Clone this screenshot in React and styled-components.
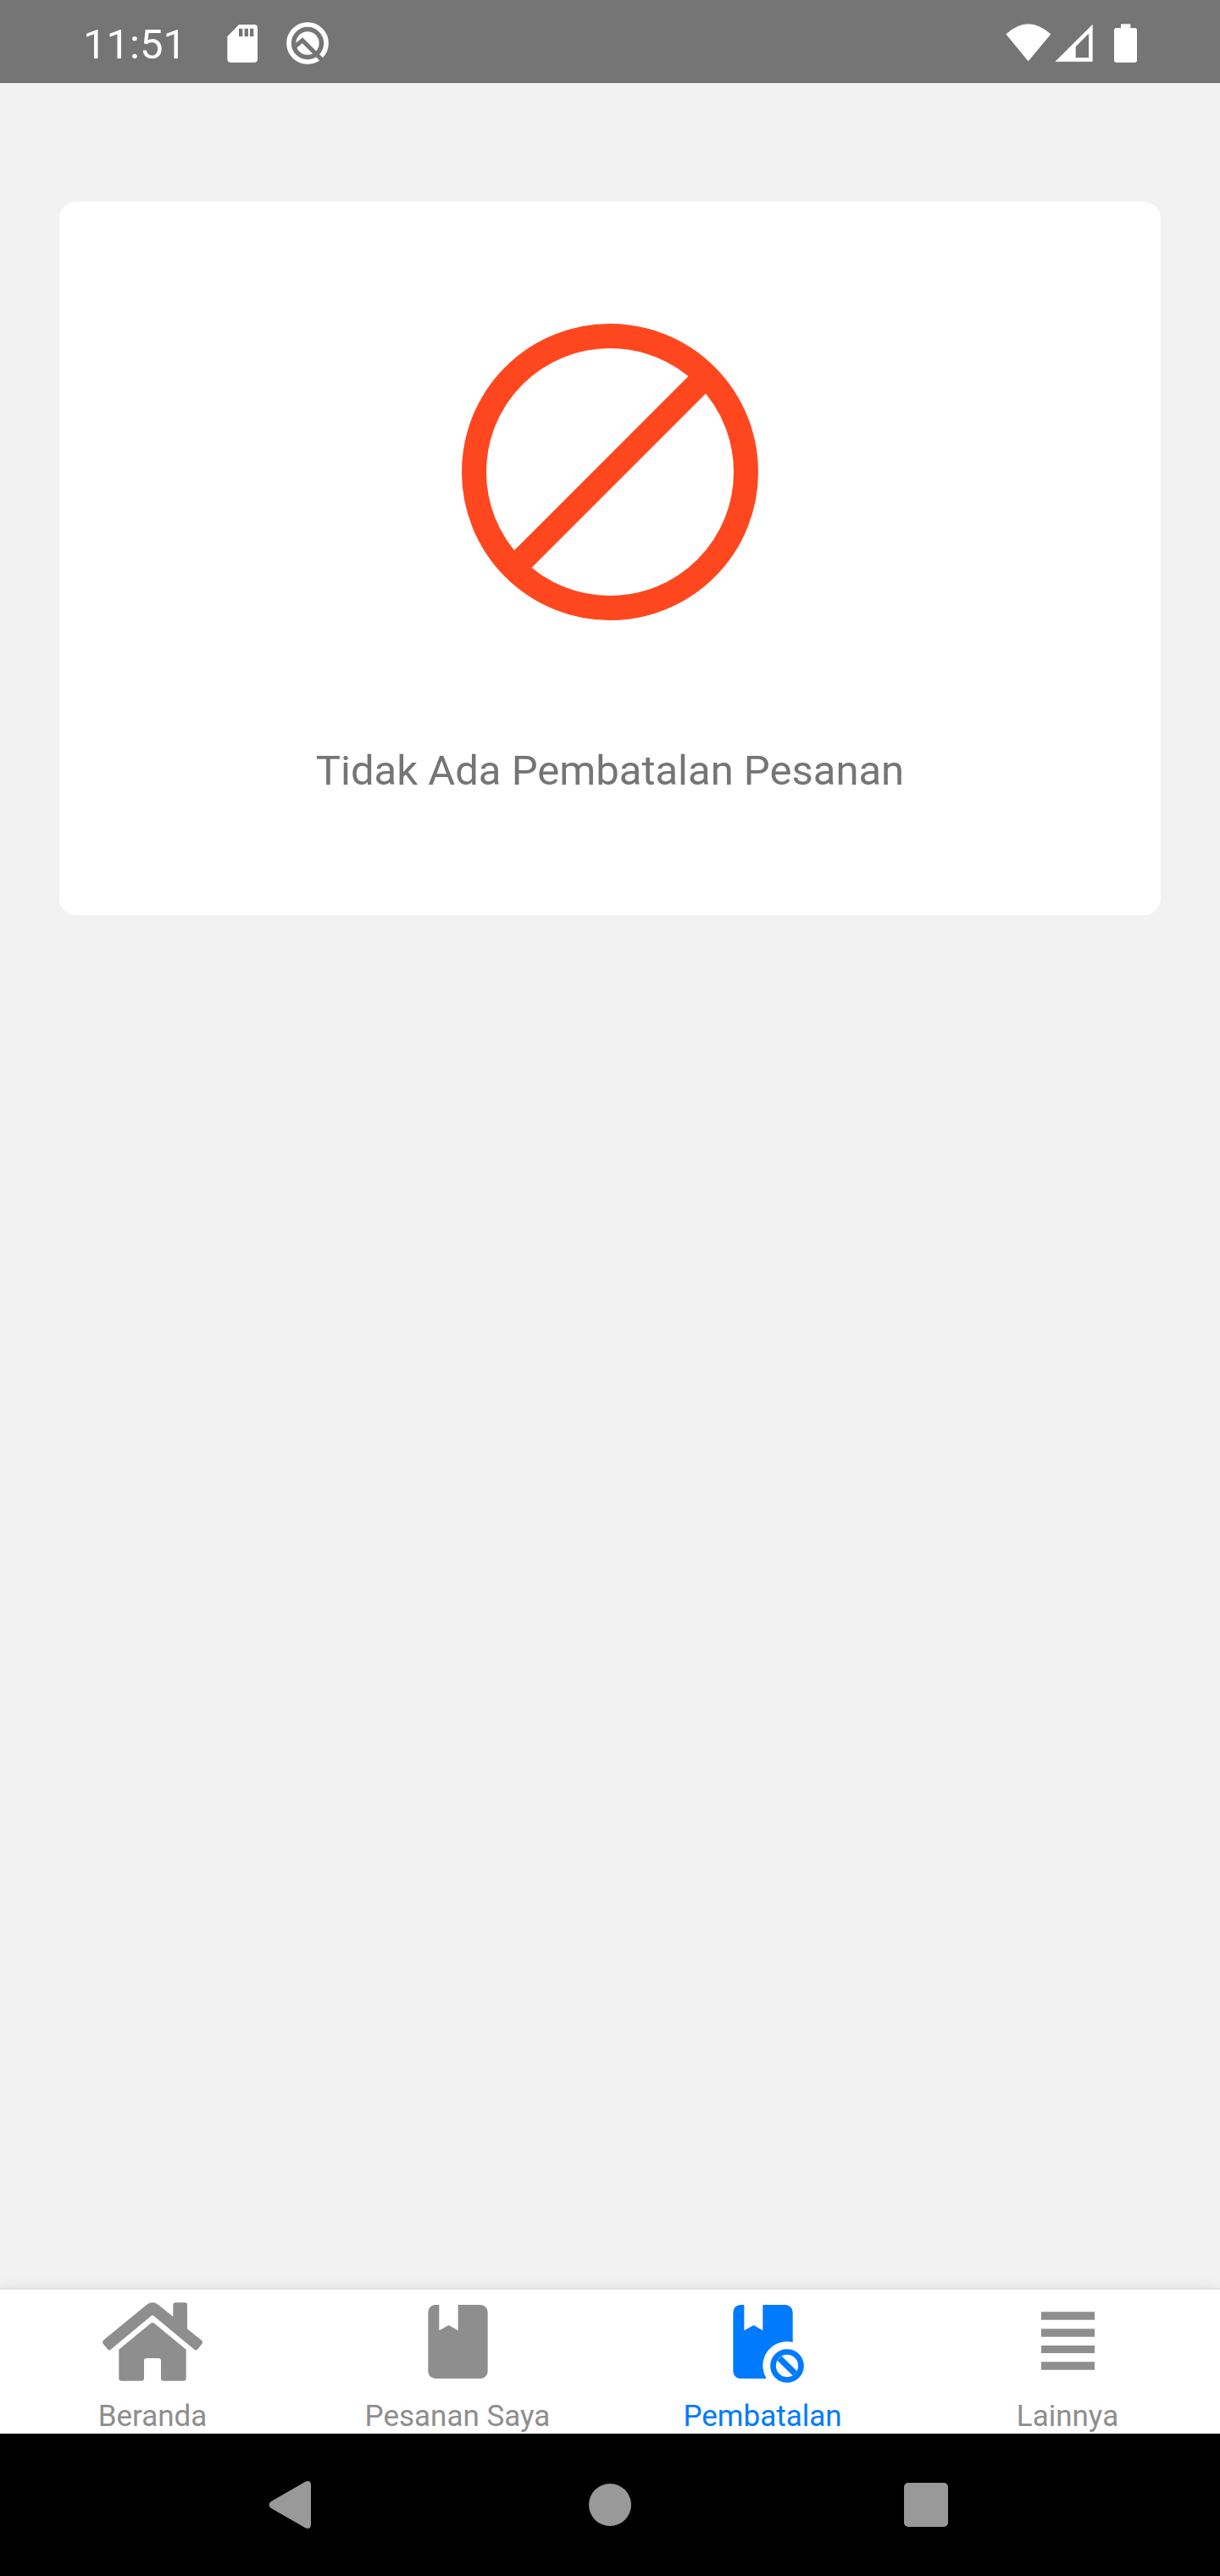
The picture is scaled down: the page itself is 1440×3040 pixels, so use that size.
import React from "react";
import styled, { createGlobalStyle } from "styled-components";

const GlobalStyle = createGlobalStyle`
  * { box-sizing: border-box; }
  body { margin: 0; background: #f2f2f2; font-family: Roboto, "Noto Sans", sans-serif; }
`;

const Screen = styled.div`
  display: flex;
  flex-direction: column;
  min-height: 100vh;
`;

const StatusBar = styled.header`
  display: flex;
  align-items: center;
  justify-content: space-between;
  height: 98px;
  padding: 8px 98px 0;
  background: #757575;
  color: #ffffff;
`;

const StatusGroup = styled.div`
  display: flex;
  align-items: center;
  gap: ${(p) => p.$gap}px;
`;

const Clock = styled.time`
  margin-right: 14px;
  font-size: 49px;
  line-height: 58px;
`;

const StatusIcon = styled.svg`
  display: block;
  width: ${(p) => p.$width}px;
  height: 54px;
  fill: currentColor;
`;

const Content = styled.main`
  flex: 1;
  padding: 140px 70px;
`;

const EmptyCard = styled.section`
  display: flex;
  flex-direction: column;
  align-items: center;
  gap: 149px;
  padding: 144px 70px 141px;
  border-radius: 20px;
  background: #ffffff;
`;

const BanIcon = styled.svg`
  display: block;
  width: 350px;
  height: 350px;
  fill: none;
  stroke: #ff471f;
  stroke-width: 29;
`;

const Message = styled.p`
  margin: 0;
  color: #757575;
  font-size: 49px;
  line-height: 58px;
  text-align: center;
`;

const TabBar = styled.nav`
  display: grid;
  grid-template-columns: repeat(4, 1fr);
  border-top: 2px solid #e3e3e3;
  background: #ffffff;
  box-shadow: 0 0 16px rgba(0, 0, 0, 0.08);
`;

const Tab = styled.button`
  display: flex;
  flex-direction: column;
  align-items: center;
  gap: 8px;
  padding: 2px 0 0;
  border: 0;
  background: none;
  color: ${(p) => (p.$active ? "#007aff" : "#8e8e8e")};
  font-family: inherit;
  font-size: 35px;
  line-height: 40px;
  cursor: pointer;
`;

const TabIcon = styled.svg`
  display: block;
  width: 120px;
  height: 120px;
  fill: currentColor;
`;

const SystemNav = styled.footer`
  display: grid;
  grid-template-columns: repeat(3, 1fr);
  height: 168px;
  padding: 0 160px;
  background: #000000;
`;

const SystemButton = styled.button`
  display: flex;
  align-items: center;
  justify-content: center;
  padding: 0;
  border: 0;
  background: none;
  color: #999999;
  cursor: pointer;
`;

const SystemIcon = styled.svg`
  display: block;
  width: 60px;
  height: 60px;
  fill: currentColor;
`;

const tabs = [
  {
    label: "Beranda",
    viewBox: "360 72 360 360",
    icon: (
      <>
        <path d="M366 245L520 119Q540 105 560 119L613 162V120Q613 112 621 112H655Q663 112 663 120V205L714 246Q720 251 715 258L700 277Q695 283 689 279L547 161Q540 154 533 161L391 279Q386 283 381 277L365 258Q361 251 366 245Z" />
        <path d="M534 185Q540 181 546 185L659 278V380Q659 389 650 389H579Q570 389 570 380V319Q570 309 561 309H519Q510 309 510 319V380Q510 389 501 389H430Q421 389 421 380V278Z" />
      </>
    ),
  },
  {
    label: "Pesanan Saya",
    viewBox: "240 72 360 360",
    icon: (
      <path d="M316 146a26 26 0 0 1 26-26H355V211L389 192L422 211V120H501a26 26 0 0 1 26 26V355a26 26 0 0 1-26 26H342a26 26 0 0 1-26-26Z" />
    ),
  },
  {
    label: "Pembatalan",
    active: true,
    viewBox: "180 72 360 360",
    icon: (
      <>
        <path d="M256 146a26 26 0 0 1 26-26H295V211L329 192L361 211V120H441a26 26 0 0 1 26 26V252A86 86 0 0 0 374 381H282a26 26 0 0 1-26-26Z" />
        <g fill="none" stroke="currentColor">
          <circle cx="447" cy="336" r="49.5" strokeWidth="20" />
          <path d="M420 309L475 363" strokeWidth="22" />
        </g>
      </>
    ),
  },
  {
    label: "Lainnya",
    viewBox: "90 72 360 360",
    icon: <path d="M177 145H366V173H177ZM177 205H366V233H177ZM177 264H366V291H177ZM177 322H366V350H177Z" />,
  },
];

export default function App() {
  return (
    <Screen>
      <GlobalStyle />
      <StatusBar>
        <StatusGroup $gap={34}>
          <Clock>11:51</Clock>
          <StatusIcon $width={36} viewBox="561 78 108 162" aria-hidden="true">
            <path
              fillRule="evenodd"
              d="M603 87H657a12 12 0 0 1 12 12V209a12 12 0 0 1-12 12H574a12 12 0 0 1-12-12V129ZM603 101V129H616V101ZM623 101V129H636V101ZM642 101V129H655V101Z"
            />
          </StatusIcon>
          <StatusIcon $width={50} viewBox="772 78 150 162" aria-hidden="true">
            <circle cx="847" cy="153" r="66" fill="none" stroke="currentColor" strokeWidth="17" />
            <circle cx="847" cy="153" r="41" />
            <path d="M802 165L829 143L900 214" fill="none" stroke="#757575" strokeWidth="15" />
          </StatusIcon>
        </StatusGroup>
        <StatusGroup $gap={4}>
          <StatusIcon $width={54} viewBox="83 78 162 162" aria-hidden="true">
            <path d="M84 121Q163 48 243 121L163 217Z" />
          </StatusIcon>
          <StatusIcon $width={45} viewBox="255 78 135 162" aria-hidden="true">
            <path fillRule="evenodd" d="M389 86V218H256ZM329 165V204H375V119Z" />
          </StatusIcon>
          <StatusIcon $width={48} viewBox="402 78 144 162" aria-hidden="true">
            <rect x="465" y="99" width="81" height="122" rx="8" />
            <rect x="489" y="85" width="34" height="18" />
          </StatusIcon>
        </StatusGroup>
      </StatusBar>
      <Content>
        <EmptyCard>
          <BanIcon viewBox="0 0 350 350" aria-hidden="true">
            <circle cx="175" cy="175" r="160.5" />
            <path d="M62 288L288 62" />
          </BanIcon>
          <Message>Tidak Ada Pembatalan Pesanan</Message>
        </EmptyCard>
      </Content>
      <TabBar>
        {tabs.map((tab) => (
          <Tab key={tab.label} type="button" $active={tab.active}>
            <TabIcon viewBox={tab.viewBox} aria-hidden="true">
              {tab.icon}
            </TabIcon>
            {tab.label}
          </Tab>
        ))}
      </TabBar>
      <SystemNav>
        <SystemButton type="button" aria-label="Kembali">
          <SystemIcon viewBox="0 0 60 60">
            <path d="M3 26L43 3Q50 0 50 7V53Q50 60 43 57L3 34Q-2 30 3 26Z" />
          </SystemIcon>
        </SystemButton>
        <SystemButton type="button" aria-label="Layar utama">
          <SystemIcon viewBox="0 0 60 60">
            <circle cx="30" cy="30" r="25" />
          </SystemIcon>
        </SystemButton>
        <SystemButton type="button" aria-label="Ringkasan">
          <SystemIcon viewBox="0 0 60 60">
            <rect x="4" y="4" width="52" height="52" rx="5" />
          </SystemIcon>
        </SystemButton>
      </SystemNav>
    </Screen>
  );
}
